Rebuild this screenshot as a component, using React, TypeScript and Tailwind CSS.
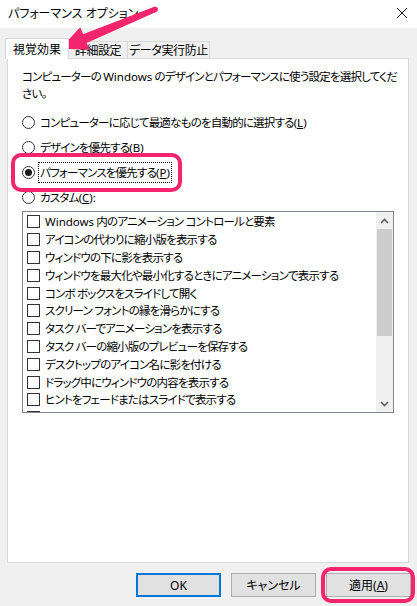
const PINK = "#f4256d";

const W = () => <span className="tracking-normal">Windows</span>;

const options: React.ReactNode[] = [
  <>
    <W /> 内のアニメーション コントロールと要素
  </>,
  "アイコンの代わりに縮小版を表示する",
  "ウィンドウの下に影を表示する",
  "ウィンドウを最大化や最小化するときにアニメーションで表示する",
  "コンボ ボックスをスライドして開く",
  "スクリーン フォントの縁を滑らかにする",
  "タスク バーでアニメーションを表示する",
  "タスク バーの縮小版のプレビューを保存する",
  "デスクトップのアイコン名に影を付ける",
  "ドラッグ中にウィンドウの内容を表示する",
  "ヒントをフェードまたはスライドで表示する",
  "マウス ポインターの下に影を表示する",
];

function Key({ k, u = true }: { k: string; u?: boolean }) {
  return <span className="tracking-normal">({u ? <u>{k}</u> : k})</span>;
}

export default function App() {
  return (
    <div className="relative h-[606px] w-[417px] overflow-hidden bg-[#f0f0f0] font-['Noto_Sans','Noto_Sans_CJK_JP',sans-serif] text-[12px] leading-[17px] text-black [font-feature-settings:'palt']">
      {/* title bar */}
      <div className="flex h-[28px] items-start justify-between bg-white pl-[8px] pr-[8px] pt-[5px]">
        <span>パフォーマンス オプション</span>
        <svg width="12" height="12" viewBox="0 0 12 12" className="mr-[1px] mt-[2px]">
          <path d="M1 1L11 11M11 1L1 11" stroke="#111" strokeWidth="1" />
        </svg>
      </div>

      {/* tabs */}
      <div className="mt-[10px] flex h-[20px] items-end pl-[5px]">
        <Tab label="視覚効果" active width={64} />
        <Tab label="詳細設定" width={59} />
        <Tab label="データ実行防止" width={82} />
      </div>

      {/* panel */}
      <div className="mx-[7px] h-[505px] w-[402px] border border-[#d9d9d9] bg-white px-[14px] pt-[9px] text-[11.5px] tracking-[-0.8px]">
        <p className="whitespace-nowrap">
          コンピューターの <W /> のデザインとパフォーマンスに使う設定を選択してくだ
          <br />
          さい。
        </p>

        <div className="mt-[8px] flex flex-col">
          <Radio>
            コンピューターに応じて最適なものを自動的に選択する<Key k="L" />
          </Radio>
          <Radio>
            デザインを優先する<Key k="B" u={false} />
          </Radio>
          <Radio checked focused>
            パフォーマンスを優先する<Key k="P" />
          </Radio>
          <Radio>
            カスタム<Key k="C" />:
          </Radio>
        </div>

        <div className="mt-[1px] flex h-[202px] w-[372px] overflow-hidden border border-[#828790] bg-white">
          <div className="flex-1 overflow-hidden pl-[4px] pt-[1px]">
            {options.map((text, i) => (
              <div key={i} className="flex h-[17.8px] items-center gap-[5px] whitespace-nowrap">
                <span className="h-[13px] w-[13px] shrink-0 border border-[#333]" />
                <span>{text}</span>
              </div>
            ))}
          </div>
          <div className="flex w-[17px] flex-col bg-[#f0f0f0]">
            <div className="flex h-[17px] items-center justify-center">
              <svg width="9" height="6" viewBox="0 0 9 6">
                <path d="M1 5L4.5 1.5L8 5" fill="none" stroke="#606060" strokeWidth="1.6" />
              </svg>
            </div>
            <div className="mx-[1px] h-[107px] bg-[#cdcdcd]" />
            <div className="flex-1" />
            <div className="flex h-[17px] items-center justify-center">
              <svg width="9" height="6" viewBox="0 0 9 6">
                <path d="M1 1L4.5 4.5L8 1" fill="none" stroke="#606060" strokeWidth="1.6" />
              </svg>
            </div>
          </div>
        </div>
      </div>

      {/* buttons */}
      <div className="mt-[10px] flex justify-end gap-[10px] pr-[6px]">
        <Button primary>OK</Button>
        <Button>キャンセル</Button>
        <Button>
          適用(<u>A</u>)
        </Button>
      </div>

      {/* annotations */}
      <div className="pointer-events-none absolute left-[11px] top-[153px] h-[39px] w-[171px] rounded-[10px] border-4 border-[#f4256d]" />
      <div className="pointer-events-none absolute left-[321px] top-[567px] h-[36px] w-[94px] rounded-[10px] border-4 border-[#f4256d]" />
      <svg
        className="pointer-events-none absolute left-0 top-0"
        width="417"
        height="606"
        viewBox="0 0 417 606"
      >
        <polygon
          points="62,48 88.4,49 85.7,42.5 156.8,10.8 155.2,7.2 82.7,35.1 80,28.6"
          fill={PINK}
          stroke={PINK}
          strokeWidth="1.5"
          strokeLinejoin="round"
        />
        <circle cx="156" cy="9" r="2" fill={PINK} />
      </svg>
    </div>
  );
}

function Tab({ label, active, width }: { label: string; active?: boolean; width: number }) {
  return (
    <div
      style={{ width }}
      className={
        active
          ? "relative z-10 mb-[-1px] flex h-[21px] items-center justify-center whitespace-nowrap border border-b-0 border-[#d9d9d9] bg-white"
          : "flex h-[17px] items-center justify-center whitespace-nowrap border border-b-0 border-l-0 border-[#d9d9d9] bg-[#f0f0f0] pt-[1px] tracking-[-0.4px]"
      }
    >
      {label}
    </div>
  );
}

function Radio({
  children,
  checked,
  focused,
}: {
  children: React.ReactNode;
  checked?: boolean;
  focused?: boolean;
}) {
  return (
    <div className="flex h-[25px] items-center gap-[3px] whitespace-nowrap">
      <span className="flex h-[13px] w-[13px] shrink-0 items-center justify-center rounded-full border border-[#333] bg-white">
        {checked && <span className="h-[7px] w-[7px] rounded-full bg-[#1a1a1a]" />}
      </span>
      <span className={focused ? "border border-dotted border-black px-[1px] py-[1px]" : "px-[2px]"}>
        {children}
      </span>
    </div>
  );
}

function Button({ children, primary }: { children: React.ReactNode; primary?: boolean }) {
  return (
    <div
      className={
        primary
          ? "flex h-[24px] w-[85px] items-center justify-center border-2 border-[#0078d7] bg-[#e1e1e1]"
          : "flex h-[24px] w-[85px] items-center justify-center border border-[#adadad] bg-[#e1e1e1]"
      }
    >
      {children}
    </div>
  );
}
